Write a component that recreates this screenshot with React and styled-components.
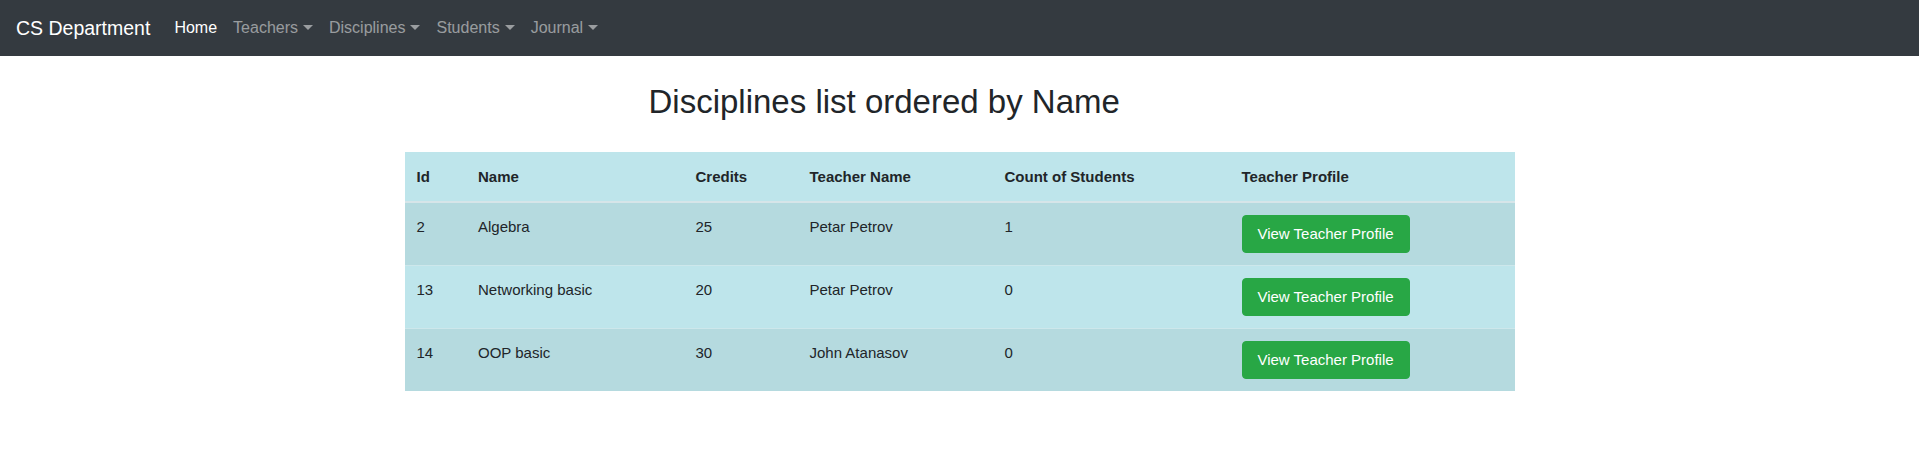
import React from "react";
import styled, { createGlobalStyle } from "styled-components";

const GlobalStyle = createGlobalStyle`
  * { box-sizing: border-box; }
  body {
    margin: 0;
    font-family: "Liberation Sans", Arial, sans-serif;
    font-size: 15px;
    line-height: 24px;
    color: #212529;
    background: #fff;
  }
`;

const NavBar = styled.nav`
  display: flex;
  align-items: center;
  height: 56px;
  padding: 0 16px;
  background: #343a40;
`;

const Brand = styled.a`
  font-size: 19.5px;
  line-height: 30px;
  color: #fff;
  margin-right: 16px;
  text-decoration: none;
`;

const NavList = styled.ul`
  display: flex;
  margin: 0;
  padding: 0;
  list-style: none;
`;

const NavLink = styled.a`
  display: inline-block;
  padding: 8px;
  font-size: 16px;
  text-decoration: none;
  color: ${(p) => (p.active ? "#fff" : "rgba(255, 255, 255, 0.5)")};

  ${(p) =>
    p.dropdown &&
    `
    &::after {
      content: "";
      display: inline-block;
      margin-left: 5px;
      vertical-align: 3px;
      border-top: 5px solid;
      border-right: 5px solid transparent;
      border-left: 5px solid transparent;
    }
  `}
`;

const Container = styled.main`
  width: 1110px;
  margin: 0 auto;
`;

const Title = styled.h2`
  margin: 26px 0 30px 244px;
  font-size: 33px;
  line-height: 1.2;
  font-weight: 400;
  color: #212529;
`;

const Table = styled.table`
  width: 100%;
  table-layout: fixed;
  border-collapse: collapse;
  background: #bee5eb;
`;

const HeadCell = styled.th`
  text-align: left;
  font-weight: 700;
  padding: 12px;
  border-top: 1px solid #bee5eb;
  border-bottom: 2px solid #d6e5e9;
  vertical-align: bottom;
`;

const Row = styled.tr`
  background: ${(p) => (p.striped ? "#b5dadf" : "transparent")};
`;

const Cell = styled.td`
  padding: 12px;
  vertical-align: top;
  border-top: 1px solid #cde7eb;
`;

const ProfileButton = styled.button`
  display: inline-block;
  width: 168px;
  height: 38px;
  padding: 6px 12px;
  font-family: inherit;
  font-size: 15px;
  line-height: 24px;
  color: #fff;
  background: #28a745;
  border: 1px solid #28a745;
  border-radius: 4px;
  cursor: pointer;
`;

const columns = [
  { label: "Id", width: 61.5 },
  { label: "Name", width: 217.5 },
  { label: "Credits", width: 114 },
  { label: "Teacher Name", width: 195 },
  { label: "Count of Students", width: 237 },
  { label: "Teacher Profile", width: 285 },
];

const disciplines = [
  { id: 2, name: "Algebra", credits: 25, teacher: "Petar Petrov", students: 1 },
  { id: 13, name: "Networking basic", credits: 20, teacher: "Petar Petrov", students: 0 },
  { id: 14, name: "OOP basic", credits: 30, teacher: "John Atanasov", students: 0 },
];

export default function App() {
  return (
    <>
      <GlobalStyle />
      <NavBar>
        <Brand href="#">CS Department</Brand>
        <NavList>
          <li><NavLink href="#" active>Home</NavLink></li>
          <li><NavLink href="#" dropdown>Teachers</NavLink></li>
          <li><NavLink href="#" dropdown>Disciplines</NavLink></li>
          <li><NavLink href="#" dropdown>Students</NavLink></li>
          <li><NavLink href="#" dropdown>Journal</NavLink></li>
        </NavList>
      </NavBar>
      <Container>
        <Title>Disciplines list ordered by Name</Title>
        <Table>
          <colgroup>
            {columns.map((c) => (
              <col key={c.label} style={{ width: c.width }} />
            ))}
          </colgroup>
          <thead>
            <tr>
              {columns.map((c) => (
                <HeadCell key={c.label}>{c.label}</HeadCell>
              ))}
            </tr>
          </thead>
          <tbody>
            {disciplines.map((d, i) => (
              <Row key={d.id} striped={i % 2 === 0}>
                <Cell>{d.id}</Cell>
                <Cell>{d.name}</Cell>
                <Cell>{d.credits}</Cell>
                <Cell>{d.teacher}</Cell>
                <Cell>{d.students}</Cell>
                <Cell>
                  <ProfileButton>View Teacher Profile</ProfileButton>
                </Cell>
              </Row>
            ))}
          </tbody>
        </Table>
      </Container>
    </>
  );
}
